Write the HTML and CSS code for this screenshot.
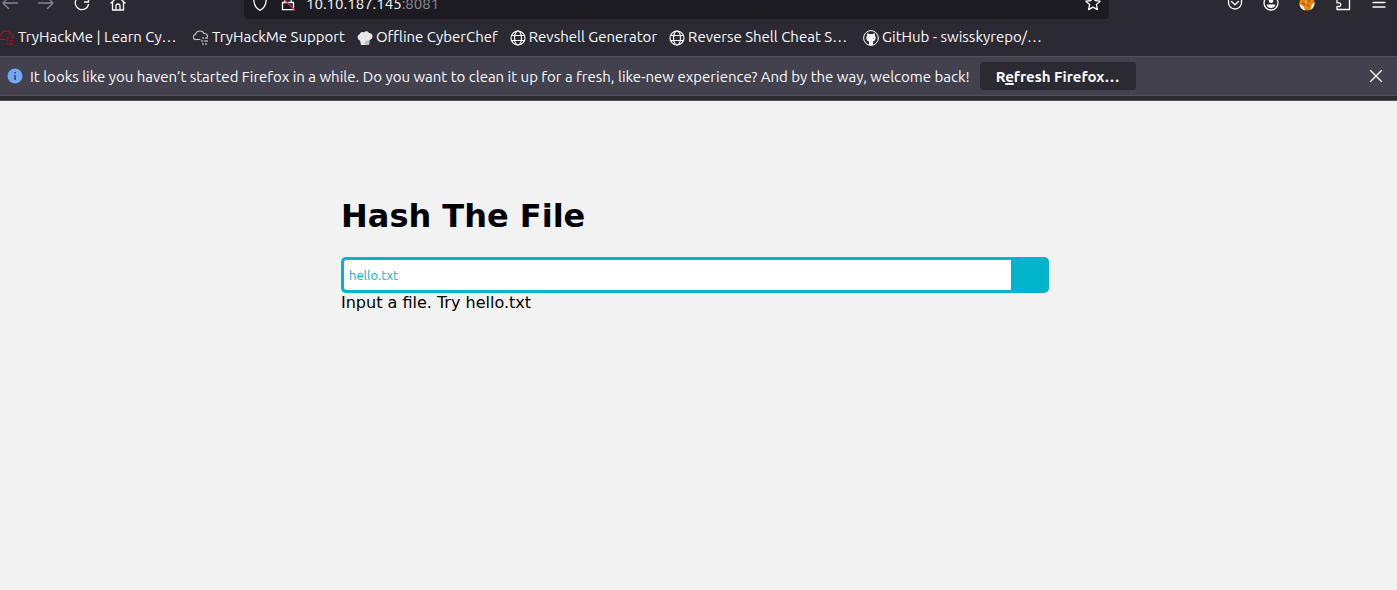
FILE: index.html
```html
<!DOCTYPE html>
<html lang="en">
<head>
    <meta charset="UTF-8">
    <meta name="viewport" content="width=device-width, initial-scale=1.0">
    <title>Hash The File</title>
    <link rel="stylesheet" href="styles.css">
</head>
<body>
    <header class="chrome">
        <!-- Navigation toolbar -->
        <div class="toolbar">
            <button type="button" class="tool disabled" aria-label="Back" disabled>
                <svg viewBox="0 0 16 16"><path d="M15.500 8H1M6.500 2.500L1 8l5.500 5.500"/></svg>
            </button>
            <button type="button" class="tool disabled" aria-label="Forward" disabled>
                <svg viewBox="0 0 16 16"><path d="M.5 8H15M9.500 2.500L15 8l-5.500 5.500"/></svg>
            </button>
            <button type="button" class="tool" aria-label="Reload">
                <svg viewBox="0 0 16 16"><path d="M12.500 3A6.700 6.700 0 1 0 14.500 9.500M14.500 2v5H10.500"/></svg>
            </button>
            <button type="button" class="tool" aria-label="Home">
                <svg viewBox="0 0 16 16"><path d="M1 8l7-6.500L15 8M2.500 7v8h11V7M6 15v-4a2 2 0 0 1 4 0v4"/></svg>
            </button>
            <div class="spacer"></div>
            <div class="urlbar">
                <svg viewBox="0 0 16 16"><path d="M8 .8L1.700 3.200C1.700 9 3.500 13.300 8 15.300c4.500-2 6.300-6.300 6.300-12.100z"/></svg>
                <svg viewBox="0 0 16 16"><path d="M2.500 7.500h11v7.200h-11zM4.800 7.500V4.500a3.200 3.200 0 0 1 6.400 0v3"/><path class="slash" d="M1.500 1.500l13 13.500"/></svg>
                <span class="url">10.10.187.145<span class="port">:8081</span></span>
                <svg viewBox="0 0 16 16"><path d="M8 1l2.100 4.600 5 .6-3.700 3.400 1 5L8 12.100l-4.400 2.500 1-5L.9 6.200l5-.6z"/></svg>
            </div>
            <div class="spacer"></div>
            <button type="button" class="tool" aria-label="Save to Pocket">
                <svg viewBox="0 0 16 16"><path d="M1.500 2h13v5.500a6.500 6.500 0 0 1-13 0zM4.500 6.500L8 9.800l3.500-3.300"/></svg>
            </button>
            <button type="button" class="tool" aria-label="Account">
                <svg viewBox="0 0 16 16"><circle cx="8" cy="8" r="7"/><circle class="solid" cx="8" cy="5.800" r="2.300"/><path class="solid" d="M3.800 9.500h8.400c0 2-1.700 3.500-4.200 3.500s-4.200-1.500-4.200-3.500z"/></svg>
            </button>
            <button type="button" class="tool" aria-label="FoxyProxy">
                <svg viewBox="0 0 16 16"><circle class="fox" cx="8" cy="8" r="7.500"/><path class="fox-white" d="M.5 8c1 2 2.500 3 4 3.500l1.500 4C2.500 14.500.5 11.500.5 8zM12.500 10.500l3-3.500c.3 3-1 6.500-4 8zM6 6l2 1-1.500 1z"/><path class="fox-dark" d="M3.500 8l2 1M9 7l2-1.500M8 10l2 1"/></svg>
            </button>
            <button type="button" class="tool" aria-label="Extensions">
                <svg viewBox="0 0 16 16"><path d="M2 4h4V2.500a1.800 1.800 0 0 1 3.600 0V4H14.500v10.500H2V11.500h2a1.800 1.800 0 0 0 0-3.600H2z"/></svg>
            </button>
            <button type="button" class="tool" aria-label="Menu">
                <svg viewBox="0 0 16 16"><path d="M2 2.500h12M2 7.500h12M2 12h12"/></svg>
            </button>
        </div>

        <!-- Bookmarks -->
        <nav class="bookmarks">
            <a href="#" class="bookmark wide">
                <svg class="red" viewBox="0 0 16 16"><path d="M6 9.500H3a2.500 2.500 0 0 1-.5-5C3 2.500 5 1 7 1c2 0 3.500 1 4 2.500 2 0 3.500 1.200 3.500 3"/><path class="bits" d="M7 8h3M12 7.500h2M8 10.500h1M11 11h3M7 13.500h2M10 14h4"/></svg>
                <span>TryHackMe | Learn Cy…</span>
            </a>
            <a href="#" class="bookmark">
                <svg class="cloud" viewBox="0 0 16 16"><path d="M7 9.500H3a2.500 2.500 0 0 1-.5-5C3 2.500 5 1 7 1c2 0 3.500 1 4 2.500 2 0 3.500 1.200 3.500 3"/><path class="bits" d="M9 8h2M12 8h3M8 11h2M11 11h4M9 14h2M12 14h2"/></svg>
                <span>TryHackMe Support</span>
            </a>
            <a href="#" class="bookmark">
                <svg viewBox="0 0 16 16"><path class="hat" d="M3 10.500C0 9.500-.3 5 3 4c.5-2 2.500-2.500 4-1.500C8.500.7 11 1.200 12 3c3 0 4.500 2.500 3 5-.5 1-1.500 1.800-2.500 2L12 15H4z"/><path class="hat-shade" d="M8 4v7l4.500-.8L12 15H8z"/></svg>
                <span>Offline CyberChef</span>
            </a>
            <a href="#" class="bookmark">
                <svg class="globe" viewBox="0 0 16 16"><circle cx="8" cy="8" r="7"/><ellipse cx="8" cy="8" rx="3.500" ry="7"/><path d="M1.500 5.500h13M1.500 10.500h13"/></svg>
                <span>Revshell Generator</span>
            </a>
            <a href="#" class="bookmark wide">
                <svg class="globe" viewBox="0 0 16 16"><circle cx="8" cy="8" r="7"/><ellipse cx="8" cy="8" rx="3.500" ry="7"/><path d="M1.500 5.500h13M1.500 10.500h13"/></svg>
                <span>Reverse Shell Cheat S…</span>
            </a>
            <a href="#" class="bookmark">
                <svg class="github" viewBox="0 0 16 16"><circle cx="8" cy="8" r="7.400"/><path class="solid" d="M6 15v-3.500C4 11 3.300 9.500 3.300 7.800c0-1 .3-1.700.8-2.300-.2-.8-.1-1.500.2-2.200.8 0 1.500.4 2.200.9 1-.2 2-.2 3 0 .7-.5 1.400-.9 2.200-.9.3.7.4 1.400.2 2.200.5.600.8 1.300.8 2.300 0 1.700-.7 3.200-2.700 3.700V15z"/></svg>
                <span>GitHub - swisskyrepo/…</span>
            </a>
        </nav>

        <!-- Notification bar -->
        <div class="notice">
            <svg viewBox="0 0 16 16"><circle class="info" cx="8" cy="8" r="7.500"/><path class="info-mark" d="M8 7v5M8 4v1.500"/></svg>
            <span class="message">It looks like you haven’t started Firefox in a while. Do you want to clean it up for a fresh, like-new experience? And by the way, welcome back!</span>
            <button type="button" class="refresh">R<u>e</u>fresh Firefox…</button>
            <button type="button" class="close" aria-label="Close">
                <svg viewBox="0 0 16 16"><path d="M2.500 2.500l11 11M13.500 2.500l-11 11"/></svg>
            </button>
        </div>
    </header>

    <main class="page">
        <h1>Hash The File</h1>
        <form class="search">
            <input type="text" class="search-term" placeholder="hello.txt" aria-label="File name">
            <button type="submit" class="search-button" aria-label="Hash"></button>
        </form>
        <p>Input a file. Try hello.txt</p>
    </main>
</body>
</html>
```
FILE: styles.css
```css
* {
    box-sizing: border-box;
}
body {
    margin: 0;
    min-height: 100vh;
    background: #f2f2f2;
    color: #000;
    font-family: "DejaVu Sans", sans-serif;
    font-size: 16px;
    overflow-x: hidden;
}
button {
    border: none;
    padding: 0;
    background: none;
    font: inherit;
    color: inherit;
}
svg {
    display: block;
    flex: none;
    width: 16px;
    height: 16px;
    fill: none;
    stroke: #fbfbfe;
    stroke-width: 1.3;
    stroke-linejoin: round;
    stroke-linecap: round;
}
.solid {
    fill: #fbfbfe;
    stroke: none;
}

/* Browser chrome */
.chrome {
    background: #2b2a33;
    color: #fbfbfe;
    font-family: Ubuntu, "Noto Sans", sans-serif;
    font-size: 15px;
    padding-bottom: 4px;
    border-bottom: 1px solid #52515d;
}

/* Toolbar, scrolled partly above the top edge */
.toolbar {
    display: flex;
    align-items: center;
    height: 40px;
    margin: -17px 0 0 -8px;
}
.tool {
    display: flex;
    justify-content: center;
    align-items: center;
    flex: none;
    width: 36px;
    height: 32px;
}
.disabled svg {
    stroke: #85848c;
}
.spacer {
    flex: none;
    width: 108px;
}
.urlbar {
    display: flex;
    align-items: center;
    flex: 1;
    gap: 12px;
    height: 32px;
    padding: 0 8px;
    border-radius: 4px;
    background: #1c1b22;
}
.url {
    flex: 1;
    margin-left: -2px;
}
.port {
    color: #8f8f96;
}
.slash {
    stroke: #e22850;
}
.fox {
    fill: #e8860c;
    stroke: none;
}
.fox-white {
    fill: #f4f4f4;
    stroke: none;
}
.fox-dark {
    stroke: #6b3b05;
    stroke-width: 1;
}

/* Bookmarks bar */
.bookmarks {
    display: flex;
    align-items: center;
    height: 33px;
    margin-left: -1px;
    padding-bottom: 3px;
}
.bookmark {
    display: flex;
    align-items: center;
    gap: 3px;
    padding-right: 12px;
    color: #fbfbfe;
    text-decoration: none;
    white-space: nowrap;
}
.bookmark span {
    line-height: 16px;
    padding-bottom: 2px;
}
.wide {
    width: 194px;
}
.red {
    stroke: #b3141c;
    stroke-width: 1.2;
}
.cloud {
    stroke: #c8c8cc;
    stroke-width: 1.2;
}
.bits {
    stroke-linecap: butt;
    stroke-width: 2;
    opacity: 0.6;
}
.hat {
    fill: #e8e8e8;
    stroke: none;
}
.hat-shade {
    fill: #bdbdbd;
    stroke: none;
}
.globe {
    stroke-width: 1.2;
}
.github {
    stroke-width: 1;
}

/* Notification bar */
.notice {
    display: flex;
    align-items: center;
    height: 40px;
    padding: 0 13px 0 7px;
    background: #42414d;
    border-top: 1px solid #52515d;
    border-bottom: 1px solid #52515d;
}
.info {
    fill: #73a7f3;
    stroke: none;
}
.info-mark {
    stroke: #42414d;
    stroke-width: 1.6;
    stroke-linecap: butt;
}
.message {
    padding-left: 7px;
    white-space: nowrap;
}
.refresh {
    height: 28px;
    margin-left: 10px;
    padding: 0 16px;
    border-radius: 4px;
    background: #2b2a33;
    font-weight: bold;
    white-space: nowrap;
}
.refresh u {
    text-decoration-thickness: 2px;
}
.close {
    margin-left: auto;
}

/* Page content */
.page {
    padding: 97px 348px 0 341px;
}
.page h1 {
    margin: 0 0 23px;
    font-size: 32px;
    line-height: 36px;
}
.page p {
    margin: 0;
    line-height: 19px;
}
.search {
    display: flex;
}
.search-term {
    flex: 1;
    min-width: 0;
    height: 36px;
    padding: 5px;
    border: 3px solid #00b4cc;
    border-right: none;
    border-radius: 5px 0 0 5px;
    outline: none;
    background: #fff;
    color: #00b4cc;
    font-family: Ubuntu, "Noto Sans", sans-serif;
    font-size: 13px;
}
.search-term::placeholder {
    color: #00b4cc;
    opacity: 1;
}
.search-button {
    width: 38px;
    height: 36px;
    border-radius: 0 5px 5px 0;
    background: #00b4cc;
    cursor: pointer;
}
```
